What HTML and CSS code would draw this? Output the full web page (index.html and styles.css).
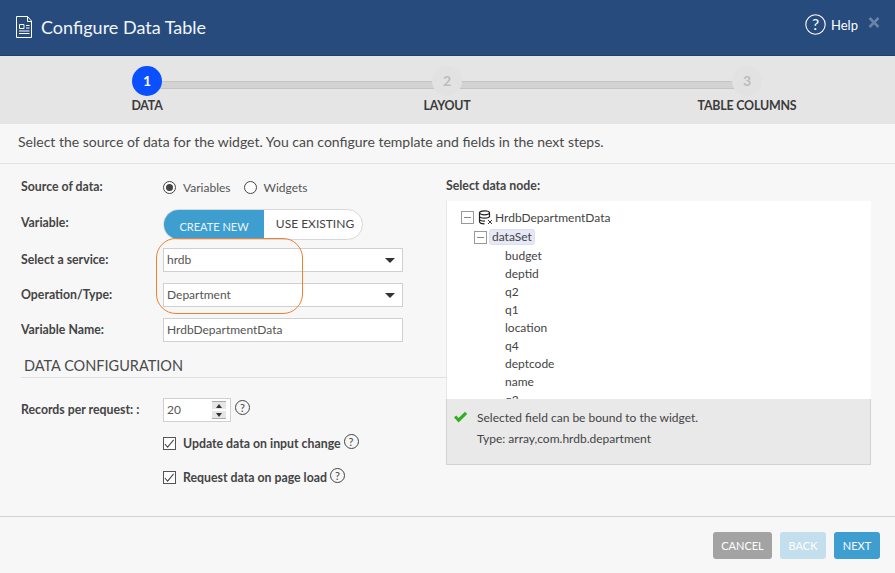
FILE: index.html
```html
<!DOCTYPE html>
<html>
  <head>
    <title>Configure Data Table</title>
    <link rel="stylesheet" href="styles.css">
  </head>
  <body>
    <div class="header">
      <svg class="doc-icon" width="17" height="22" viewBox="0 0 17 22" fill="none" stroke="#fff">
        <path d="M.5.5H11.5L15.5 5V21.5H.5Z"/>
        <path d="M11.5.5V5.5H15.5"/>
        <path d="M3.5 8.5H8V12.5H3.5ZM10 9.5H13.5M10 12H13.5M3 15H13.5M3 17.5H13.5"/>
      </svg>
      <h1>Configure Data Table</h1>
      <svg class="help-icon" width="21" height="21" viewBox="0 0 21 21">
        <circle cx="10.5" cy="10.5" r="9.7" fill="none" stroke="#fff" stroke-width="1.1"/>
        <text x="10.5" y="16" text-anchor="middle" class="help-mark">?</text>
      </svg>
      <span class="help">Help</span>
      <svg class="close" width="12" height="11" viewBox="0 0 12 11"><path d="M1.5 1L10.5 10M10.5 1L1.5 10" stroke="#6a83a6" stroke-width="2.6"/></svg>
    </div>

    <div class="steps">
      <div class="step active">
        <div class="circle">1</div>
        <div class="step-name">DATA</div>
      </div>
      <div class="step">
        <div class="circle">2</div>
        <div class="step-name">LAYOUT</div>
      </div>
      <div class="step">
        <div class="circle">3</div>
        <div class="step-name">TABLE COLUMNS</div>
      </div>
    </div>

    <p class="desc">Select the source of data for the widget. You can configure template and fields in the next steps.</p>

    <div class="content">
      <div class="left">
        <div class="row row-source">
          <label>Source of data:</label>
          <div class="radios">
            <span class="radio on"></span><span>Variables</span>
            <span class="radio"></span><span>Widgets</span>
          </div>
        </div>
        <div class="row row-variable">
          <label>Variable:</label>
          <div class="toggle">
            <span class="toggle-new">CREATE NEW</span>
            <span class="toggle-old">USE EXISTING</span>
          </div>
        </div>
        <div class="row row-service">
          <label>Select a service:</label>
          <div class="field select">hrdb<span class="caret"></span></div>
        </div>
        <div class="row row-service">
          <label>Operation/Type:</label>
          <div class="field select">Department<span class="caret"></span></div>
        </div>
        <div class="row row-name">
          <label>Variable Name:</label>
          <div class="field">HrdbDepartmentData</div>
        </div>
        <div class="highlight"></div>

        <h3>DATA CONFIGURATION</h3>

        <div class="row row-records">
          <label>Records per request: :</label>
          <div class="field number">20
            <span class="spinner"><span class="up"></span><span class="down"></span></span>
          </div>
          <span class="hint hint-top">?</span>
        </div>
        <div class="check-row">
          <span class="check"><svg width="13" height="13" viewBox="0 0 13 13"><path d="M2 7L5 10.5L11.5 2.5" fill="none" stroke="#444" stroke-width="1.1"/></svg></span>
          <span class="check-label">Update data on input change</span>
          <span class="hint">?</span>
        </div>
        <div class="check-row">
          <span class="check"><svg width="13" height="13" viewBox="0 0 13 13"><path d="M2 7L5 10.5L11.5 2.5" fill="none" stroke="#444" stroke-width="1.1"/></svg></span>
          <span class="check-label">Request data on page load</span>
          <span class="hint">?</span>
        </div>
      </div>

      <div class="right">
        <div class="node-title">Select data node:</div>
        <div class="tree">
          <div class="node root">
            <span class="toggler"></span>
            <svg class="db-icon" width="15" height="15" viewBox="0 0 15 15" fill="none" stroke="#222" stroke-width="1.2">
              <ellipse cx="6.5" cy="2.8" rx="5" ry="2"/>
              <path d="M1.5 2.8V11.5C1.5 13 4 13.8 6.5 13.8M11.5 2.8V7M1.5 6C1.5 7.5 4 8.2 6.5 8.2S11.5 7.5 11.5 6M1.5 9C1.5 10.5 4 11.2 7 11.2"/>
              <path d="M10 10L14 14M14 10L10 14" stroke-width=".9"/>
            </svg>
            <span>HrdbDepartmentData</span>
          </div>
          <div class="node second">
            <span class="toggler"></span>
            <span class="picked">dataSet</span>
          </div>
          <div class="leaf">budget</div>
          <div class="leaf">deptid</div>
          <div class="leaf">q2</div>
          <div class="leaf">q1</div>
          <div class="leaf">location</div>
          <div class="leaf">q4</div>
          <div class="leaf">deptcode</div>
          <div class="leaf">name</div>
          <div class="leaf">q3</div>
        </div>
        <div class="message">
          <div class="message-line">
            <svg class="tick" width="15" height="12" viewBox="0 0 15 12"><path d="M1 6.5L3.2 4.5L5.6 7L12 .8L14.2 2.9L5.6 11.4Z" fill="#2eb01f"/></svg>
            Selected field can be bound to the widget.
          </div>
          <div class="message-type">Type: array,com.hrdb.department</div>
        </div>
      </div>
    </div>

    <div class="footer">
      <button class="btn btn-cancel">CANCEL</button>
      <button class="btn btn-back">BACK</button>
      <button class="btn btn-next">NEXT</button>
    </div>
  </body>
</html>
```

FILE: styles.css
```css
*{
    margin: 0;
    padding: 0;
    box-sizing: border-box;
}
html, body{
    height: 100%;
}
body{
    width: 895px;
    height: 573px;
    overflow: hidden;
    background-color: #f7f7f7;
    color: #444;
    font-family: Lato, "Liberation Sans", sans-serif;
    font-size: 12px;
}

/* title bar */
.header{
    height: 56px;
    background-color: #274b7d;
    border-bottom: 1px solid #1f3f6c;
    color: white;
    display: flex;
    align-items: center;
    padding: 0 15px 2px 16px;
}
.doc-icon{
    margin-right: 8px;
    margin-top: 1px;
}
h1{
    font-size: 18px;
    font-weight: 400;
    color: #f2f5f9;
    flex: 1;
}
.help-icon{
    margin-bottom: 5px;
}
.help-mark{
    fill: white;
    font-family: Lato, sans-serif;
    font-size: 16px;
}
.help{
    font-size: 13px;
    margin-left: 5px;
    margin-bottom: 3px;
    width: 37px;
}
.close{
    margin-bottom: 9px;
}

/* wizard steps */
.steps{
    height: 68px;
    background-color: #e5e5e5;
    display: flex;
    overflow: hidden;
}
.step{
    width: 300px;
    flex: none;
    display: flex;
    flex-direction: column;
    align-items: center;
    padding-top: 10px;
    position: relative;
    left: -3px;
}
.step:not(:last-child)::after{
    content: "";
    position: absolute;
    top: 25px;
    left: 150px;
    width: 300px;
    height: 6px;
    background-color: #d3d3d3;
    border-top: 1px solid #c4c4c4;
    border-bottom: 1px solid #c4c4c4;
}
.circle{
    width: 30px;
    height: 30px;
    border-radius: 50%;
    background-color: #e2e2e2;
    color: #bdbdbd;
    font-size: 14px;
    font-weight: 700;
    line-height: 30px;
    text-align: center;
    position: relative;
    z-index: 1;
}
.step.active .circle{
    background-color: #0a50ff;
    color: white;
}
.step-name{
    margin-top: 2px;
    font-size: 12.4px;
    font-weight: 700;
    color: #3b3b3b;
    letter-spacing: -0.2px;
}

.desc{
    height: 40px;
    line-height: 36px;
    padding-left: 18px;
    border-bottom: 1px solid #e2e2e2;
    font-size: 14px;
    color: #4a4a4a;
}

/* form */
.content{
    height: 352px;
    display: flex;
}
.left{
    width: 446px;
    flex: none;
    padding-top: 14px;
    position: relative;
}
.row{
    display: flex;
    align-items: center;
    padding-left: 21px;
}
.row label{
    width: 142px;
    flex: none;
    font-weight: 700;
    color: #444;
    font-size: 12.3px;
    padding-bottom: 2px;
}
.row-source{
    height: 18px;
    margin-bottom: 13px;
}
.radios{
    display: flex;
    align-items: center;
    color: #555;
}
.radio{
    width: 13px;
    height: 13px;
    border: 1px solid #444;
    border-radius: 50%;
    background-color: white;
    margin-right: 7px;
    position: relative;
}
.radio:nth-of-type(3){
    margin-left: 13px;
}
.radio.on::after{
    content: "";
    position: absolute;
    left: 2px;
    top: 2px;
    width: 7px;
    height: 7px;
    border-radius: 50%;
    background-color: #444;
}
.row-variable{
    height: 31px;
    margin-bottom: 8px;
}
.row-variable label{
    padding-bottom: 5px;
}
.toggle{
    width: 200px;
    height: 31px;
    display: flex;
    border: 1px solid #d8d8d8;
    border-radius: 16px;
    overflow: hidden;
    background-color: white;
}
.toggle-new{
    width: 100px;
    background-color: #3d9ecf;
    color: #eaf5fb;
    text-align: center;
    line-height: 33px;
    font-size: 11px;
}
.toggle-old{
    flex: 1;
    padding-left: 4px;
    text-align: center;
    line-height: 27px;
    font-size: 12px;
    color: #444;
}
.row-service{
    height: 24px;
    margin-bottom: 11px;
}
.row-name{
    height: 24px;
    margin-bottom: 15px;
}
.field{
    width: 240px;
    height: 24px;
    border: 1px solid #d0d0d0;
    background-color: white;
    line-height: 22px;
    padding-left: 3px;
    color: #555;
    font-size: 12px;
    position: relative;
}
.caret{
    position: absolute;
    right: 7px;
    top: 9px;
    border-left: 5px solid transparent;
    border-right: 5px solid transparent;
    border-top: 5px solid #333;
}
.highlight{
    position: absolute;
    left: 156px;
    top: 74px;
    width: 147px;
    height: 76px;
    border: 1px solid #f08030;
    border-radius: 20px;
}
h3{
    margin-left: 21px;
    padding: 0 0 3px 3px;
    border-bottom: 1px solid #e0e0e0;
    font-size: 14.5px;
    font-weight: 400;
    color: #4a4a4a;
    line-height: 17px;
}
.row-records{
    height: 24px;
    margin-top: 20px;
    margin-bottom: 12px;
}
.number{
    width: 68px;
}
.spinner{
    position: absolute;
    right: 4px;
    top: 2px;
    width: 14px;
    height: 18px;
    display: flex;
    flex-direction: column;
    gap: 2px;
}
.up, .down{
    flex: 1;
    background-color: #e6e6e6;
    position: relative;
}
.up{
    border-top: 1px solid #aaa;
}
.down{
    border-bottom: 1px solid #aaa;
}
.up::after, .down::after{
    content: "";
    position: absolute;
    left: 4px;
    top: 2px;
    border-left: 3px solid transparent;
    border-right: 3px solid transparent;
}
.up::after{
    border-bottom: 4px solid #333;
}
.down::after{
    border-top: 4px solid #333;
}
.hint{
    width: 15px;
    height: 15px;
    flex: none;
    border: 1px solid #444;
    border-radius: 50%;
    font-size: 11px;
    line-height: 13px;
    text-align: center;
    color: #444;
    margin-left: 3px;
    margin-bottom: 3px;
}
.hint-top{
    margin-left: 4px;
    margin-bottom: 6px;
}
.check-row{
    height: 18px;
    margin-bottom: 16px;
    padding-left: 163px;
    display: flex;
    align-items: center;
}
.check{
    width: 13px;
    height: 13px;
    flex: none;
    border: 1px solid #555;
    background-color: white;
    margin-right: 7px;
    display: flex;
}
.check svg{
    margin: -1px 0 0 -1px;
}
.check-label{
    font-weight: 700;
    font-size: 12.3px;
    color: #444;
}

/* data node panel */
.right{
    width: 425px;
    flex: none;
    padding-top: 13px;
}
.node-title{
    height: 24px;
    font-weight: 700;
    font-size: 12.3px;
    line-height: 18px;
}
.tree{
    height: 198px;
    overflow: hidden;
    background-color: white;
    border-left: 1px solid #e6e6e6;
    padding-top: 6px;
    color: #444;
}
.node{
    display: flex;
    align-items: center;
    height: 20px;
}
.root{
    padding-left: 14px;
}
.second{
    padding-left: 27px;
}
.toggler{
    width: 13px;
    height: 13px;
    border: 1px solid #999;
    margin-right: 4px;
    position: relative;
    flex: none;
}
.second .toggler{
    margin-right: 2px;
}
.toggler::after{
    content: "";
    position: absolute;
    left: 2px;
    top: 5px;
    width: 7px;
    height: 1px;
    background-color: #888;
}
.db-icon{
    margin-right: 2px;
    flex: none;
}
.picked{
    background-color: #e6e8f6;
    border-radius: 3px;
    border: 1px solid #dcdff0;
    padding: 0 2px;
    line-height: 14px;
    height: 16px;
}
.leaf{
    height: 18px;
    line-height: 18px;
    padding-left: 58px;
}
.message{
    height: 66px;
    background-color: #e9e9e9;
    border: 1px solid #d2d2d2;
    border-width: 0 1px 1px 1px;
    padding: 10px 0 0 6px;
    color: #444;
}
.message-line{
    display: flex;
    align-items: center;
    gap: 9px;
    height: 16px;
}
.message-type{
    margin-top: 6px;
    padding-left: 24px;
    line-height: 16px;
}

/* buttons */
.footer{
    height: 57px;
    border-top: 1px solid #d2d2d2;
    display: flex;
    justify-content: flex-end;
    align-items: flex-start;
    gap: 8px;
    padding: 15px 15px 0 0;
}
.btn{
    height: 27px;
    border: none;
    border-radius: 3px;
    color: white;
    font-family: Lato, sans-serif;
    font-size: 11px;
}
.btn-cancel{
    width: 59px;
    background-color: #a3a3a3;
}
.btn-back{
    width: 46px;
    background-color: #c3deec;
}
.btn-next{
    width: 46px;
    background-color: #3d9ecf;
}
```
